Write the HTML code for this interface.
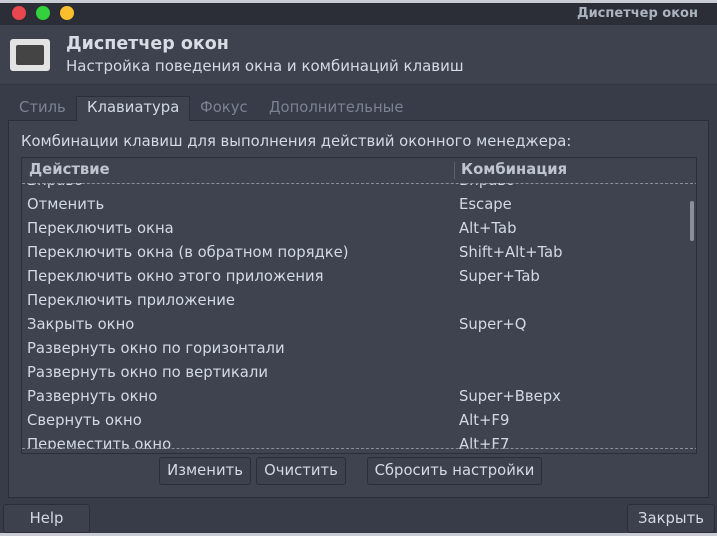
<!DOCTYPE html><html><head><meta charset="utf-8"><style>
*{margin:0;padding:0;box-sizing:border-box}
body{width:717px;height:536px;overflow:hidden;background:#383c48;font-family:"DejaVu Sans","Liberation Sans",sans-serif;color:#d3dae3;position:relative;font-size:14.8px}
.a{position:absolute;white-space:nowrap}
.btn{position:absolute;background:#3d414d;border:1px solid #2b2e37;border-radius:3px;text-align:center;line-height:26px;color:#d3dae3}
</style></head><body>
<div class="a" style="left:0;top:0;width:717px;height:3px;background:#c9ccd2"></div>
<div class="a" style="left:0;top:3px;width:717px;height:22px;background:#2b2e37"></div>
<div class="a" style="left:12px;top:6px;width:14px;height:14px;border-radius:50%;background:#e9474d"></div>
<div class="a" style="left:36px;top:6px;width:14px;height:14px;border-radius:50%;background:#33d13d"></div>
<div class="a" style="left:60px;top:6px;width:14px;height:14px;border-radius:50%;background:#fbbf2d"></div>
<div class="a" style="left:577px;top:6px;font-size:13px;font-weight:bold;color:#aab4c0">Диспетчер окон</div>
<div class="a" style="left:0;top:25px;width:717px;height:60px;background:#3e424e;border-bottom:1px solid #33363f"></div>
<div class="a" style="left:10px;top:39px;width:40px;height:32px;background:#e3e3e3;border-radius:3px"></div>
<div class="a" style="left:16px;top:45px;width:28px;height:20px;background:#444;border-radius:2px"></div>
<div class="a" style="left:66px;top:34px;font-size:17.5px;font-weight:bold;color:#d8dde5">Диспетчер окон</div>
<div class="a" style="left:66px;top:57px;font-size:15px;color:#d3dae3">Настройка поведения окна и комбинаций клавиш</div>
<div class="a" style="left:8px;top:120px;width:701px;height:378px;background:#3f4350;border:1px solid #2b2e37"></div>
<div class="a" style="left:76px;top:96px;width:114px;height:25px;background:#3f4350;border:1px solid #2b2e37;border-bottom:none"></div>
<div class="a" style="left:19px;top:99px;color:#7c8290">Стиль</div>
<div class="a" style="left:87px;top:99px;color:#d3dae3">Клавиатура</div>
<div class="a" style="left:200px;top:99px;color:#7c8290">Фокус</div>
<div class="a" style="left:269px;top:99px;color:#7c8290">Дополнительные</div>
<div class="a" style="left:21px;top:133px">Комбинации клавиш для выполнения действий оконного менеджера:</div>
<div class="a" style="left:21px;top:157px;width:676px;height:297px;background:#3f4350;border:1px solid #2b2e37;overflow:hidden">
<div class="a" style="left:7px;top:3px;font-weight:bold;color:#bfc5ce">Действие</div>
<div class="a" style="left:432px;top:4px;width:1px;height:17px;background:#5b606c"></div>
<div class="a" style="left:439px;top:3px;font-weight:bold;color:#bfc5ce">Комбинация</div>
<div class="a" style="left:0;top:25px;width:676px;height:266px;overflow:hidden">
<div class="a" style="left:5px;top:-14px;line-height:24px">Вправо<br>Отменить<br>Переключить окна<br>Переключить окна (в обратном порядке)<br>Переключить окно этого приложения<br>Переключить приложение<br>Закрыть окно<br>Развернуть окно по горизонтали<br>Развернуть окно по вертикали<br>Развернуть окно<br>Свернуть окно<br>Переместить окно</div>
<div class="a" style="left:437px;top:-14px;line-height:24px">Вправо<br>Escape<br>Alt+Tab<br>Shift+Alt+Tab<br>Super+Tab<br><br>Super+Q<br><br><br>Super+Вверх<br>Alt+F9<br>Alt+F7</div>
</div>
<div class="a" style="left:0;top:25px;width:676px;border-top:1px dashed #8a909b"></div>
<div class="a" style="left:0;top:290px;width:676px;border-top:1px dashed #8a909b"></div>
<div class="a" style="left:668px;top:43px;width:4px;height:40px;border-radius:2px;background:#8a909b"></div>
</div>
<div class="btn" style="left:159px;top:457px;width:92px;height:28px">Изменить</div>
<div class="btn" style="left:256px;top:457px;width:90px;height:28px">Очистить</div>
<div class="btn" style="left:367px;top:457px;width:175px;height:28px">Сбросить настройки</div>
<div class="btn" style="left:3px;top:504px;width:87px;height:29px;line-height:27px">Help</div>
<div class="btn" style="left:627px;top:504px;width:88px;height:29px;line-height:27px">Закрыть</div>
<div class="a" style="left:0;top:533px;width:717px;height:3px;background:#c9ccd2"></div>
</body></html>
